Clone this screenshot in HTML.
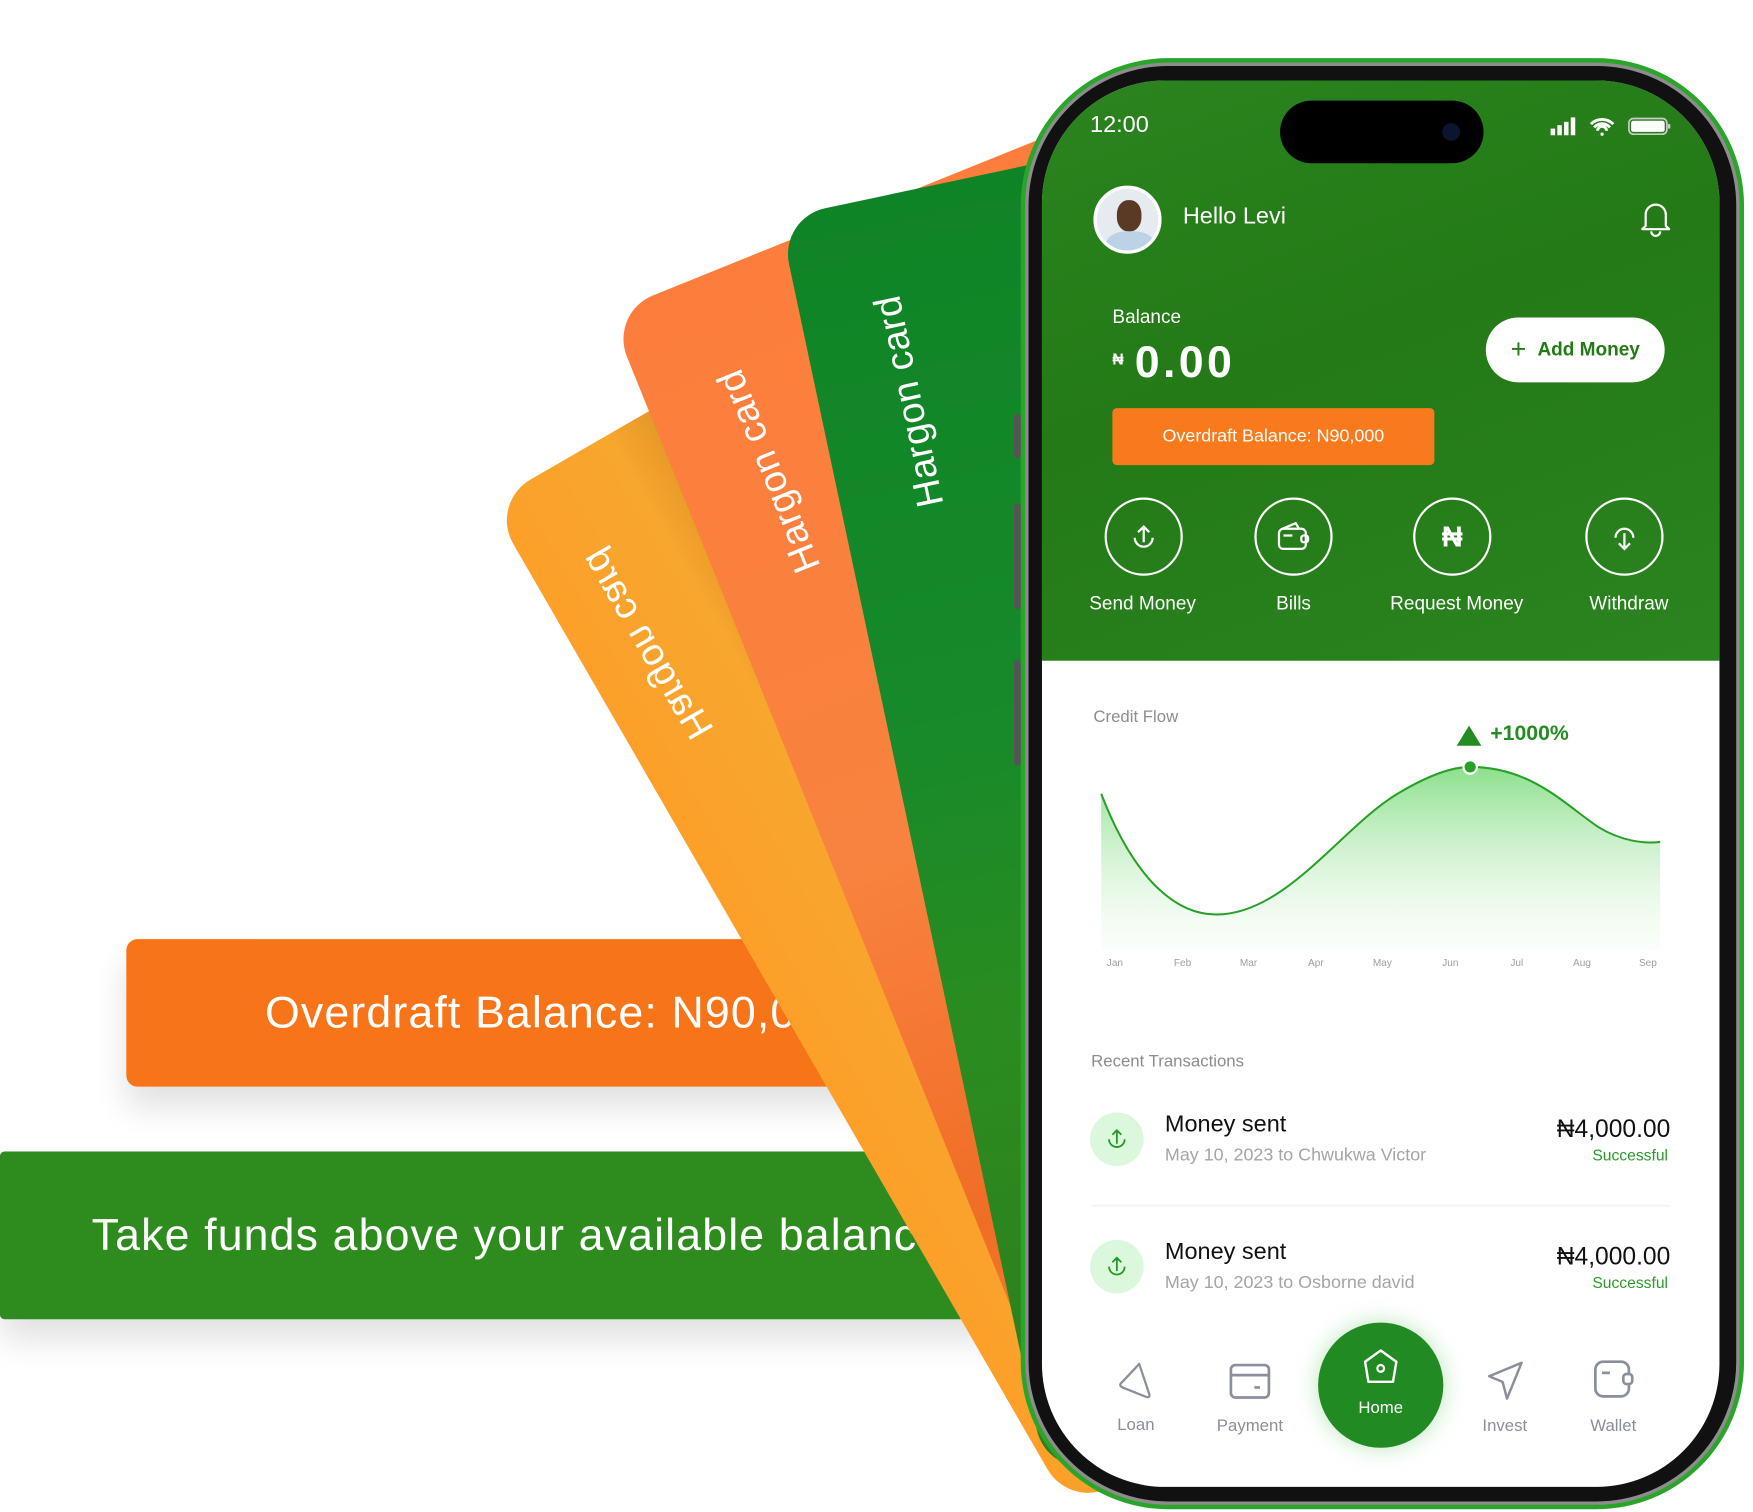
<!DOCTYPE html>
<html><head><meta charset="utf-8">
<style>
*{margin:0;padding:0;box-sizing:border-box}
html,body{width:1753px;height:1512px;overflow:hidden;background:#fff;font-family:"Liberation Sans",sans-serif}
#root{position:absolute;left:0;top:0;width:1568px;height:1352px;transform:scale(1.11798);transform-origin:0 0}
.abs{position:absolute}
.banner{position:absolute;color:#fff;font-size:40px;letter-spacing:1px;display:flex;align-items:center;box-shadow:0 18px 30px rgba(0,0,0,.12)}
.card{position:absolute;transform-origin:0 0;border-radius:42px;overflow:hidden}
.card span{position:absolute;left:-40px;top:165px;width:240px;text-align:center;color:#fff;font-size:34px;font-weight:500;letter-spacing:.5px;white-space:nowrap}
.w{color:#fff}
.ic{position:absolute;width:70px;height:70px;border:2px solid #fff;border-radius:50%;display:flex;align-items:center;justify-content:center}
.lbl{position:absolute;color:#fff;font-size:17px;transform:translateX(-50%);white-space:nowrap;top:530px}
.mon{position:absolute;top:856px;font-size:9px;color:#9aa0a6}
.nav{position:absolute;font-size:15px;color:#8a8f9c;transform:translateX(-50%)}
</style></head><body><div id="root">

<div class="banner" style="left:113px;top:840px;width:700px;height:132px;background:#f77419;border-radius:10px;padding-left:124px">Overdraft Balance: N90,000</div>
<div class="banner" style="left:0;top:1030px;width:920px;height:150px;background:#2e8b1e;border-radius:4px;padding-left:82px">Take funds above your available balance</div>

<div class="card" style="left:438px;top:450px;width:560px;height:1040px;transform:rotate(-30deg);background:linear-gradient(90deg,#fca02a 0%,#f7a62e 22%,#c8821e 42%,#e8961f 58%,#f9a524 100%)"><span style="transform:rotate(-90deg) scaleY(-1);left:-60px;top:160px">Hargon card</span></div>
<div class="card" style="left:545px;top:280px;width:560px;height:1100px;transform:rotate(-22deg);background:linear-gradient(180deg,#fd7e3c 0%,#f8823f 50%,#f06d25 80%,#f38a3a 100%)"><span style="transform:rotate(-90deg)">Hargon card</span></div>
<div class="card" style="left:697px;top:195px;width:560px;height:1150px;transform:rotate(-12deg);background:linear-gradient(180deg,#0f8426 0%,#168a2a 40%,#2a8c20 65%,#2f7d1d 100%)"><span style="transform:rotate(-90deg)">Hargon card</span></div>

<!-- phone -->
<div class="abs" style="left:913px;top:52px;width:647px;height:1298px;border-radius:132px;background:#2aa52a"></div>
<div class="abs" style="left:917px;top:56px;width:639px;height:1290px;border-radius:128px;background:#111;border:3px solid #8d8d8d"></div>
<div class="abs" style="left:907px;top:370px;width:6px;height:40px;background:#555;border-radius:3px"></div>
<div class="abs" style="left:907px;top:450px;width:6px;height:95px;background:#555;border-radius:3px"></div>
<div class="abs" style="left:907px;top:590px;width:6px;height:95px;background:#555;border-radius:3px"></div>
<div class="abs" style="left:932px;top:72px;width:606px;height:1258px;border-radius:110px;background:#fff;overflow:hidden">
  <div class="abs" style="left:0;top:0;width:606px;height:519px;background:linear-gradient(160deg,#2b841f 0%,#237a16 45%,#2b8420 100%)"></div>
</div>
<div class="abs w" style="left:975px;top:100px;font-size:21px">12:00</div>
<div class="abs" style="left:1145px;top:90px;width:182px;height:56px;border-radius:28px;background:#000"></div>
<div class="abs" style="left:1290px;top:110px;width:16px;height:16px;border-radius:50%;background:#0b1530"></div>
<svg class="abs" style="left:1385px;top:103px" width="112" height="20" viewBox="0 0 112 20">
<rect x="2" y="12" width="4" height="6" fill="#fff"/><rect x="8" y="9" width="4" height="9" fill="#fff"/><rect x="14" y="6" width="4" height="12" fill="#fff"/><rect x="20" y="2" width="4" height="16" fill="#fff"/>
<path d="M38 8a14 14 0 0 1 20 0M41 11a9 9 0 0 1 14 0M44 14a4 4 0 0 1 8 0" stroke="#fff" stroke-width="2.6" fill="none"/><circle cx="48" cy="17" r="1.5" fill="#fff"/>
<rect x="72" y="3" width="34" height="14" rx="4" fill="none" stroke="#ccc" stroke-width="1.5"/><rect x="74" y="5" width="30" height="10" rx="2" fill="#fff"/><rect x="107" y="8" width="2" height="4" fill="#ccc"/></svg>

<div class="abs" style="left:978px;top:166px;width:61px;height:61px;border-radius:50%;background:#e6ebef;border:3px solid #fff;overflow:hidden">
 <div class="abs" style="left:18px;top:10px;width:22px;height:28px;border-radius:45%;background:#5a3a24"></div>
 <div class="abs" style="left:8px;top:38px;width:44px;height:30px;border-radius:40% 40% 0 0;background:#bcd2e6"></div></div>
<div class="abs w" style="left:1058px;top:182px;font-size:21px">Hello Levi</div>
<svg class="abs" style="left:1466px;top:178px" width="30" height="34" viewBox="0 0 30 34"><path d="M6 24V14a9 9 0 0 1 18 0v10l3 3H3z M11 29a4 4 0 0 0 8 0" stroke="#fff" stroke-width="2" fill="none" stroke-linejoin="round"/></svg>

<div class="abs w" style="left:995px;top:274px;font-size:17px">Balance</div>
<div class="abs w" style="left:995px;top:313px;font-size:14px;font-weight:bold">₦</div>
<div class="abs w" style="left:1015px;top:302px;font-size:40px;font-weight:bold;letter-spacing:3px">0.00</div>
<div class="abs" style="left:1329px;top:284px;width:160px;height:58px;border-radius:29px;background:#fff;color:#237a16;font-size:17px;font-weight:bold;display:flex;align-items:center;justify-content:center"><span style="font-size:24px;font-weight:normal;margin-right:10px">+</span>Add Money</div>
<div class="abs w" style="left:995px;top:365px;width:288px;height:51px;border-radius:4px;background:#f87a1d;font-size:16px;display:flex;align-items:center;justify-content:center">Overdraft Balance: N90,000</div>

<div class="ic" style="left:988px;top:445px"><svg width="30" height="30" viewBox="0 0 30 30"><path d="M15 20V6M10 11l5-5 5 5M7 16a8 8 0 0 0 16 0" stroke="#fff" stroke-width="2" fill="none"/></svg></div>
<div class="ic" style="left:1122px;top:445px"><svg width="34" height="30" viewBox="0 0 34 30"><rect x="4" y="8" width="24" height="18" rx="4" stroke="#fff" stroke-width="2" fill="none"/><path d="M7 8l12-5 3 5M8 14h8" stroke="#fff" stroke-width="2" fill="none"/><rect x="24" y="14" width="6" height="6" rx="2" stroke="#fff" stroke-width="2" fill="none"/></svg></div>
<div class="ic" style="left:1264px;top:445px;color:#fff;font-size:26px;font-weight:bold">₦</div>
<div class="ic" style="left:1418px;top:445px"><svg width="30" height="30" viewBox="0 0 30 30"><path d="M15 12v14M10 21l5 5 5-5M7 16a8 8 0 0 1 16 0" stroke="#fff" stroke-width="2" fill="none"/></svg></div>
<div class="lbl" style="left:1022px">Send Money</div>
<div class="lbl" style="left:1157px">Bills</div>
<div class="lbl" style="left:1303px">Request Money</div>
<div class="lbl" style="left:1457px">Withdraw</div>

<div class="abs" style="left:978px;top:633px;font-size:15px;color:#8d8d8d">Credit Flow</div>
<svg class="abs" style="left:0;top:0" width="1568" height="900">
<defs><linearGradient id="g" x1="0" y1="0" x2="0" y2="1"><stop offset="0" stop-color="#7fdc7f" stop-opacity=".9"/><stop offset="1" stop-color="#e9f9e9" stop-opacity=".2"/></linearGradient></defs>
<path d="M985,710 C1010,775 1045,818 1088,818 C1150,818 1200,740 1250,710 C1280,692 1300,686 1315,686 C1370,686 1400,720 1430,740 C1450,752 1470,755 1485,753 L1485,850 L985,850 Z" fill="url(#g)"/>
<path d="M985,710 C1010,775 1045,818 1088,818 C1150,818 1200,740 1250,710 C1280,692 1300,686 1315,686 C1370,686 1400,720 1430,740 C1450,752 1470,755 1485,753" fill="none" stroke="#26a026" stroke-width="1.8"/>
<circle cx="1315" cy="686" r="6" fill="#26a026" stroke="#fff" stroke-width="2"/>
<path d="M1303,667 L1314,649 L1325,667 Z" fill="#238c23"/>
</svg>
<div class="abs" style="left:1333px;top:646px;font-size:19px;font-weight:bold;color:#238c23">+1000%</div>
<div class="mon" style="left:990px">Jan</div><div class="mon" style="left:1050px">Feb</div><div class="mon" style="left:1109px">Mar</div><div class="mon" style="left:1170px">Apr</div><div class="mon" style="left:1228px">May</div><div class="mon" style="left:1290px">Jun</div><div class="mon" style="left:1351px">Jul</div><div class="mon" style="left:1407px">Aug</div><div class="mon" style="left:1466px">Sep</div>

<div class="abs" style="left:976px;top:941px;font-size:15px;color:#8d8d8d">Recent Transactions</div>

<div class="abs" style="left:975px;top:995px;width:48px;height:48px;border-radius:50%;background:#dcf8dc;display:flex;align-items:center;justify-content:center"><svg width="20" height="22" viewBox="0 0 20 22"><path d="M10 15V3M6 7l4-4 4 4M3 11a7 7 0 0 0 14 0" stroke="#229922" stroke-width="1.6" fill="none"/></svg></div>
<div class="abs" style="left:1042px;top:994px;font-size:21px;color:#111">Money sent</div>
<div class="abs" style="left:1042px;top:1025px;font-size:16px;color:#a5a5a5">May 10, 2023 to Chwukwa Victor</div>
<div class="abs" style="right:74px;top:997px;font-size:22px;color:#111">₦4,000.00</div>
<div class="abs" style="right:76px;top:1025px;font-size:14px;color:#2a9a2a">Successful</div>
<div class="abs" style="left:976px;top:1078px;width:518px;height:1px;background:#f0f0f0"></div>

<div class="abs" style="left:975px;top:1109px;width:48px;height:48px;border-radius:50%;background:#dcf8dc;display:flex;align-items:center;justify-content:center"><svg width="20" height="22" viewBox="0 0 20 22"><path d="M10 15V3M6 7l4-4 4 4M3 11a7 7 0 0 0 14 0" stroke="#229922" stroke-width="1.6" fill="none"/></svg></div>
<div class="abs" style="left:1042px;top:1108px;font-size:21px;color:#111">Money sent</div>
<div class="abs" style="left:1042px;top:1139px;font-size:16px;color:#a5a5a5">May 10, 2023 to Osborne david</div>
<div class="abs" style="right:74px;top:1111px;font-size:22px;color:#111">₦4,000.00</div>
<div class="abs" style="right:76px;top:1139px;font-size:14px;color:#2a9a2a">Successful</div>

<div class="abs" style="left:1179px;top:1183px;width:112px;height:112px;border-radius:50%;background:#228a22;box-shadow:0 0 20px rgba(60,180,60,.35)"></div>
<svg class="abs" style="left:1217px;top:1205px" width="36" height="36" viewBox="0 0 36 36"><path d="M18 3L32 13 29 31H7L4 13Z" stroke="#fff" stroke-width="2.2" fill="none" stroke-linejoin="round"/><circle cx="18" cy="19" r="3" stroke="#fff" stroke-width="2" fill="none"/></svg>
<div class="nav" style="left:1235px;top:1251px;color:#fff">Home</div>
<svg class="abs" style="left:998px;top:1215px" width="36" height="40" viewBox="0 0 36 40"><path d="M21 5L30 32Q31 36 26 34L6 26Q2 24 6 21Z" stroke="#8a8f9c" stroke-width="2" fill="none" stroke-linejoin="round"/></svg>
<div class="nav" style="left:1016px;top:1266px">Loan</div>
<svg class="abs" style="left:1098px;top:1218px" width="40" height="36" viewBox="0 0 40 36"><rect x="3" y="3" width="34" height="29" rx="4" stroke="#8a8f9c" stroke-width="2.4" fill="none"/><path d="M3 12h34M24 23h5" stroke="#8a8f9c" stroke-width="2.4"/></svg>
<div class="nav" style="left:1118px;top:1267px">Payment</div>
<svg class="abs" style="left:1328px;top:1215px" width="36" height="40" viewBox="0 0 36 40"><path d="M33 4L4 16l12 5 4 15Z" stroke="#8a8f9c" stroke-width="2.2" fill="none" stroke-linejoin="round"/></svg>
<div class="nav" style="left:1346px;top:1267px">Invest</div>
<svg class="abs" style="left:1424px;top:1215px" width="40" height="38" viewBox="0 0 40 38"><rect x="3" y="3" width="30" height="31" rx="7" stroke="#8a8f9c" stroke-width="2.4" fill="none"/><path d="M9 13h7" stroke="#8a8f9c" stroke-width="2.4"/><rect x="28" y="14" width="8" height="9" rx="3" stroke="#8a8f9c" stroke-width="2.4" fill="#fff"/></svg>
<div class="nav" style="left:1443px;top:1267px">Wallet</div>

</div></body></html>
